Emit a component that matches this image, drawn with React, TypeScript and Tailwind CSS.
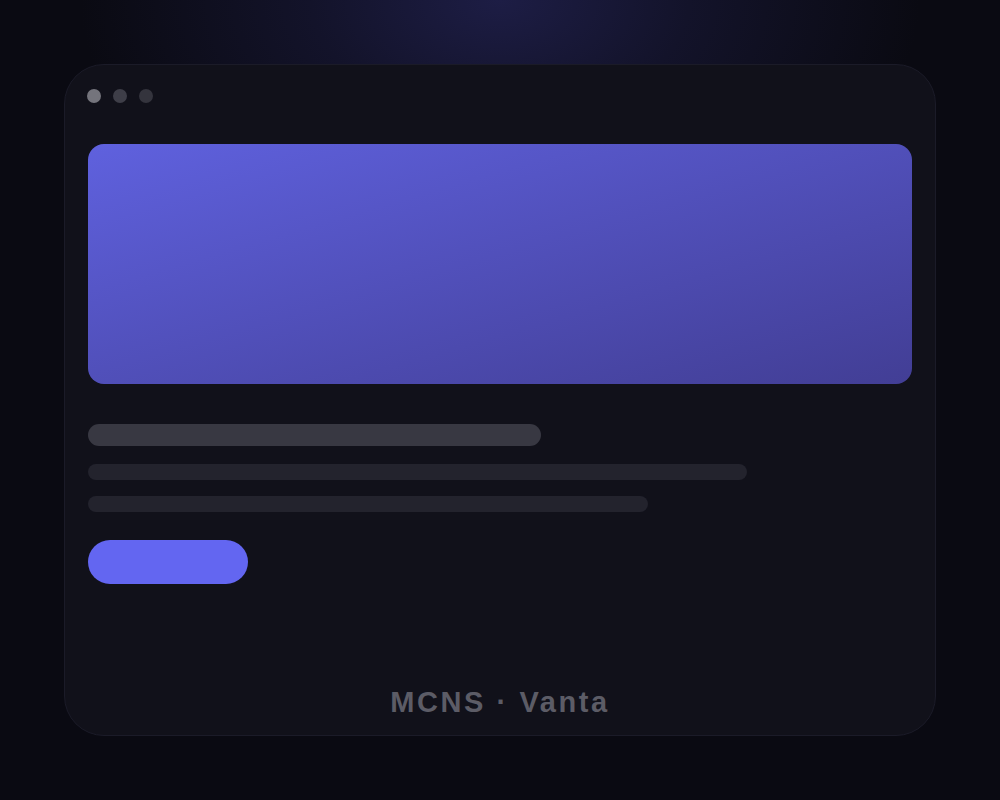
export default function App() {
  return (
    <main className="min-h-screen w-full bg-[#0a0a12] bg-[radial-gradient(ellipse_420px_260px_at_50%_0%,#1d1d45_0%,#13132a_45%,#0a0a12_100%)] flex items-center justify-center font-['Liberation_Sans',Arial,sans-serif]">
      <div className="w-[872px] h-[672px] rounded-[40px] bg-[#11111a] border border-[#1b1b28] px-[23px] pt-[24px] pb-[18px] flex flex-col">
        <div className="flex items-center gap-3 h-[14px] -ml-px">
          <span className="w-[14px] h-[14px] rounded-full bg-[#74747c]" />
          <span className="w-[14px] h-[14px] rounded-full bg-[#3e3e48]" />
          <span className="w-[14px] h-[14px] rounded-full bg-[#34343d]" />
        </div>
        <div className="mt-[41px] h-[240px] rounded-2xl bg-linear-to-br from-[#5f61de] to-[#423e95]" />
        <div className="mt-10 h-[22px] w-[453px] rounded-full bg-[#383842]" />
        <div className="mt-[18px] h-4 w-[659px] rounded-full bg-[#23232d]" />
        <div className="mt-4 h-4 w-[560px] rounded-full bg-[#23232d]" />
        <div className="mt-7 h-11 w-40 rounded-full bg-[#6366f1]" />
        <div className="mt-auto text-center text-[29px] font-bold tracking-[2.6px] text-[#5c5c66] leading-none">
          MCNS · Vanta
        </div>
      </div>
    </main>
  )
}
